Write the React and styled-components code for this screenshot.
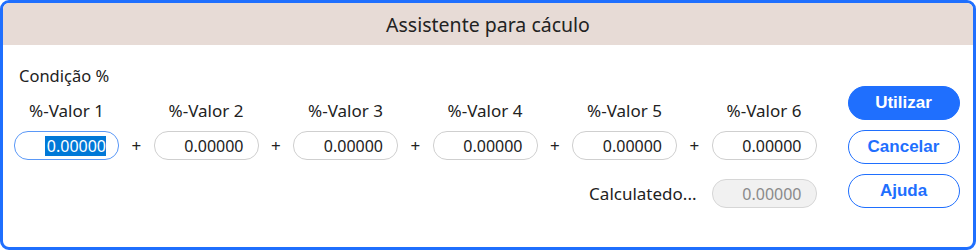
import React from "react";
import styled, { createGlobalStyle } from "styled-components";

const Global = createGlobalStyle`
  body {
    margin: 0;
    background: #ffffff;
    font-family: "Noto Sans", "Open Sans", sans-serif;
    color: #222222;
  }
`;

const Frame = styled.div`
  box-sizing: border-box;
  width: 976px;
  height: 250px;
  border: 3px solid #1f6ffe;
  border-radius: 9px;
  overflow: hidden;
  background: #ffffff;
`;

const Header = styled.div`
  height: 42px;
  background: #e7dbd6;
  display: flex;
  align-items: center;
  justify-content: center;
  font-size: 19.5px;
  color: #222;
`;

const Body = styled.div`
  display: flex;
  align-items: flex-start;
  padding: 21px 0 0 11px;
`;

const Main = styled.div`
  display: flex;
  flex-direction: column;
`;

const Caption = styled.div`
  font-size: 16.5px;
  line-height: 20px;
  padding-left: 5px;
`;

const Grid = styled.div`
  display: grid;
  grid-template-columns: repeat(5, 105px 34.5px) 105px;
  grid-template-rows: 20px 29px;
  row-gap: 10px;
  margin-top: 15px;
`;

const Label = styled.div`
  font-size: 17px;
  line-height: 20px;
  text-align: center;
  white-space: nowrap;
  grid-row: 1;
  grid-column: ${(p) => p.$col};
`;

const Plus = styled.div`
  grid-row: 2;
  grid-column: ${(p) => p.$col};
  display: flex;
  align-items: center;
  justify-content: center;
  font-size: 17px;
`;

const Field = styled.div`
  box-sizing: border-box;
  width: 105px;
  height: 29px;
  border-radius: 14px;
  border: 1px solid ${(p) => (p.$focused ? "#5a98f7" : p.$disabled ? "#d6d6d6" : "#cfcfcf")};
  background: ${(p) => (p.$disabled ? "#f1f1f1" : "#ffffff")};
  color: ${(p) => (p.$disabled ? "#8a8a8a" : "#222")};
  display: flex;
  align-items: center;
  justify-content: flex-end;
  padding-right: ${(p) => (p.$focused ? "12px" : "14px")};
  font-size: 16px;
  grid-row: 2;
  grid-column: ${(p) => p.$col || "auto"};
`;

const Selected = styled.span`
  background: #0078d7;
  color: #ffffff;
  line-height: 20px;
  padding-left: 2px;
`;

const CalcRow = styled.div`
  display: flex;
  align-items: center;
  justify-content: flex-end;
  gap: 15px;
  margin-top: 19px;
`;

const CalcLabel = styled.div`
  font-size: 17px;
`;

const Buttons = styled.div`
  display: flex;
  flex-direction: column;
  gap: 10px;
  margin: 20px 0 0 31px;
`;

const Button = styled.button`
  box-sizing: border-box;
  width: 112px;
  height: 34px;
  border-radius: 17px;
  border: 1px solid #1f6ffe;
  background: ${(p) => (p.$primary ? "#1f6ffe" : "#ffffff")};
  color: ${(p) => (p.$primary ? "#ffffff" : "#1f6ffe")};
  font-family: "Liberation Sans", Arial, sans-serif;
  font-weight: bold;
  font-size: 17px;
  padding: 0;
  cursor: pointer;
`;

const values = [1, 2, 3, 4, 5, 6];

export default function App() {
  return (
    <>
      <Global />
      <Frame>
        <Header>Assistente para cáculo</Header>
        <Body>
          <Main>
            <Caption>Condição %</Caption>
            <Grid>
              {values.map((n, i) => (
                <Label key={"l" + n} $col={i * 2 + 1}>
                  %-Valor {n}
                </Label>
              ))}
              {values.map((n, i) => (
                <React.Fragment key={"f" + n}>
                  {i > 0 && <Plus $col={i * 2}>+</Plus>}
                  <Field $col={i * 2 + 1} $focused={i === 0}>
                    {i === 0 ? <Selected>0.00000</Selected> : "0.00000"}
                  </Field>
                </React.Fragment>
              ))}
            </Grid>
            <CalcRow>
              <CalcLabel>Calculatedo...</CalcLabel>
              <Field $disabled>0.00000</Field>
            </CalcRow>
          </Main>
          <Buttons>
            <Button $primary>Utilizar</Button>
            <Button>Cancelar</Button>
            <Button>Ajuda</Button>
          </Buttons>
        </Body>
      </Frame>
    </>
  );
}
